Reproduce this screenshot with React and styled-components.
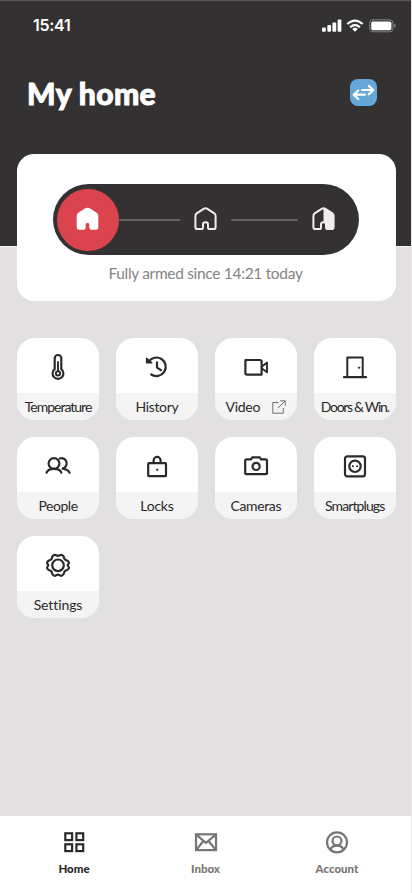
import React from "react";
import styled, { createGlobalStyle } from "styled-components";

const GlobalStyle = createGlobalStyle`
	* {
		box-sizing: border-box;
	}
	body {
		margin: 0;
		background: #e2e0e1;
		font-family: "Lato", "Noto Sans", sans-serif;
		color: #2b292a;
	}
`;

const HouseShape =
	"M9.6 1.9 L2.7 6.4 Q1.4 7.3 1.4 8.8 V20.2 Q1.4 22 3.2 22 H7.4 Q9 22 9 20.4 V17.2 Q9 15.2 11.5 15.2 T14 17.2 V20.4 Q14 22 15.6 22 H19.8 Q21.6 22 21.6 20.2 V8.8 Q21.6 7.3 20.3 6.4 L13.4 1.9 Q11.5 .8 9.6 1.9Z";

const House = ({ variant }) => (
	<svg width="23" height="24" viewBox="0 0 23 24" fill="none">
		<path
			d={HouseShape}
			fill={variant === "full" ? "#fff" : "none"}
			stroke={variant === "full" ? "#fff" : "#f0edee"}
			strokeWidth={variant === "full" ? 1.4 : 2}
			strokeLinejoin="round"
		/>
		{variant === "half" && (
			<path
				d="M11.5 1.4 Q12.5 1.4 13.4 1.9 L20.3 6.4 Q21.6 7.3 21.6 8.8 V20.2 Q21.6 22 19.8 22 H15.6 Q14 22 14 20.4 V17.2 Q14 15.2 11.5 15.2Z"
				fill="#f0edee"
			/>
		)}
	</svg>
);

const Icon = ({ children, size = 28, color = "#2b292a" }) => (
	<svg
		width={size}
		height={size}
		viewBox="0 0 28 28"
		fill="none"
		stroke={color}
		strokeWidth="2.2"
		strokeLinecap="round"
		strokeLinejoin="round"
	>
		{children}
	</svg>
);

const tiles = [
	{
		label: "Temperature",
		spacing: -1,
		icon: (
			<>
				<path d="M10.7 16.2 V5.3 a3.3 3.3 0 0 1 6.6 0 V16.2 a5.4 5.4 0 1 1 -6.6 0Z" />
				<path d="M14 9 V17.5" strokeWidth="1.9" />
				<circle cx="14" cy="20.4" r="2.1" strokeWidth="1.9" />
			</>
		),
	},
	{
		label: "History",
		spacing: -0.35,
		icon: (
			<>
				<path d="M5.6 8.8 A9.3 9.3 0 1 1 8.2 21.5" />
				<path d="M3.6 5.3 V9.8 H8.8Z" fill="#2b292a" strokeWidth="1.4" />
				<path d="M14 9.4 V14.6 L18 17.1" />
			</>
		),
	},
	{
		label: "Video",
		spacing: -0.3,
		external: true,
		icon: (
			<>
				<path d="M3.4 7 H18 Q19.6 7 19.6 8.6 V21.6 H5 Q3.4 21.6 3.4 20Z" />
				<path d="M20 13.4 L25 9.6 V19.2 L20 15.6" strokeWidth="1.9" />
			</>
		),
	},
	{
		label: "Doors & Win.",
		spacing: -1.3,
		icon: (
			<>
				<path d="M6.3 23.7 V4.5 H21.7 V23.7" strokeWidth="2" />
				<path d="M3 24.2 H25" />
				<circle cx="18" cy="14.7" r=".7" fill="#2b292a" strokeWidth="1" />
			</>
		),
	},
	{
		label: "People",
		spacing: -0.45,
		icon: (
			<>
				<circle cx="10" cy="11.5" r="5.4" />
				<path d="M2.6 20.7 C4.5 15.7 15.5 15.7 17.4 20.7" />
				<path d="M15.8 6.5 A5.2 5.2 0 1 1 18.6 16.5 M18.6 16.7 Q23.5 17.2 25.6 20.7" />
			</>
		),
	},
	{
		label: "Locks",
		spacing: -0.25,
		icon: (
			<>
				<rect x="5.2" y="11.1" width="17.8" height="13.1" rx=".8" />
				<path d="M10.6 10.8 V8.4 a3.5 3.5 0 0 1 7 0 V10.8" />
				<circle cx="14.1" cy="17.7" r=".7" fill="#2b292a" strokeWidth="1" />
			</>
		),
	},
	{
		label: "Cameras",
		spacing: -0.35,
		icon: (
			<>
				<path d="M4.6 7.3 H9 L10.3 5.4 H17.8 L19.1 7.3 H23.6 Q25 7.3 25 8.7 V20.8 Q25 22.2 23.6 22.2 H4.6 Q3.2 22.2 3.2 20.8 V8.7 Q3.2 7.3 4.6 7.3Z" />
				<circle cx="14.1" cy="14.4" r="3.6" />
			</>
		),
	},
	{
		label: "Smartplugs",
		spacing: -0.9,
		icon: (
			<>
				<rect x="4" y="4.3" width="20" height="20" rx="2.3" />
				<circle cx="14" cy="14.3" r="5.7" />
				<circle cx="11.9" cy="14.3" r=".5" strokeWidth="1.1" />
				<circle cx="16.1" cy="14.3" r=".5" strokeWidth="1.1" />
			</>
		),
	},
	{
		label: "Settings",
		spacing: -0.1,
		icon: (
			<>
				<path d="M14 4.9 C16 4.9 16.2 3.2 18 4 C20.8 5.1 19.4 6.9 20.7 8.3 C22.2 10 23.8 8.8 24.8 11.2 C25.7 13.2 23.7 12.8 23.7 14.3 C23.7 15.8 25.7 15.4 24.8 17.4 C23.8 19.8 22.2 18.6 20.7 20.3 C19.4 21.7 20.8 23.5 18 24.6 C16.2 25.4 16 23.7 14 23.7 C12 23.7 11.8 25.4 10 24.6 C7.2 23.5 8.6 21.7 7.3 20.3 C5.8 18.6 4.2 19.8 3.2 17.4 C2.3 15.4 4.3 15.8 4.3 14.3 C4.3 12.8 2.3 13.2 3.2 11.2 C4.2 8.8 5.8 10 7.3 8.3 C8.6 6.9 7.2 5.1 10 4 C11.8 3.2 12 4.9 14 4.9Z" />
				<circle cx="14" cy="14.3" r="5.8" />
			</>
		),
	},
];

const tabs = [
	{
		label: "Home",
		active: true,
		icon: (
			<g strokeLinejoin="miter">
				<rect x="5.3" y="5.3" width="6.8" height="6.8" />
				<rect x="16.4" y="5.3" width="6.8" height="6.8" />
				<rect x="5.3" y="16.3" width="6.8" height="6.8" />
				<rect x="16.4" y="16.3" width="6.8" height="6.8" />
			</g>
		),
	},
	{
		label: "Inbox",
		icon: (
			<g strokeLinejoin="miter">
				<rect x="4" y="6.3" width="20" height="15.8" />
				<path d="M4.5 6.8 L14 14.9 L23.5 6.8 M4.5 21.6 L11 13.5 M23.5 21.6 L17 13.5" />
			</g>
		),
	},
	{
		label: "Account",
		icon: (
			<>
				<circle cx="14" cy="14.3" r="10" />
				<circle cx="14" cy="12.9" r="4.4" />
				<path d="M7.6 21.2 C9.5 16.4 18.5 16.4 20.4 21.2" />
			</>
		),
	},
];

const App = () => {
	return (
		<>
			<GlobalStyle />
			<Screen>
				<Header>
					<StatusBar>
						<Time>15:41</Time>
						<svg width="75" height="14" viewBox="0 0 75 14" fill="#fff">
							<rect x="0" y="8.4" width="3.8" height="4.4" rx="1" />
							<rect x="5.3" y="6" width="3.8" height="6.8" rx="1" />
							<rect x="10.4" y="3.4" width="3.8" height="9.4" rx="1" />
							<rect x="15.6" y=".6" width="3.8" height="12.2" rx="1" />
							<g fill="none" stroke="#fff" strokeWidth="2.2">
								<path d="M25.3 5 Q33 -1.9 40.7 5" />
								<path d="M28.1 8.2 Q33 3.8 37.9 8.2" />
							</g>
							<path d="M30.2 10 Q33 7.7 35.8 10 L33 12.8Z" />
							<rect x="47.6" y=".8" width="23.4" height="12" rx="3.4" fill="none" stroke="#858384" />
							<rect x="49.2" y="2.4" width="20.2" height="8.8" rx="1.7" />
							<path d="M72.2 4.8 Q73.8 5.4 73.8 6.8 T72.2 8.8Z" fill="#858384" />
						</svg>
					</StatusBar>
					<TitleRow>
						<Title>My home</Title>
						<SwapButton aria-label="Switch home">
							<svg width="27" height="27" viewBox="0 0 27 27" fill="none" stroke="#fff" strokeWidth="2.2" strokeLinecap="round" strokeLinejoin="round">
								<path d="M12.2 11 H23 M18.8 6.9 L23.3 11 L18.8 15.3" />
								<path d="M15 15.7 H4 M8.2 11.6 L3.7 15.7 L8.2 20" />
							</svg>
						</SwapButton>
					</TitleRow>
				</Header>
				<AlarmCard>
					<Track>
						<Mode $active>
							<House variant="full" />
						</Mode>
						<Line $width={61} />
						<Mode>
							<House />
						</Mode>
						<Line $width={67} />
						<Mode>
							<House variant="half" />
						</Mode>
					</Track>
					<AlarmText>Fully armed since 14:21 today</AlarmText>
				</AlarmCard>
				<Grid>
					{tiles.map((tile) => (
						<Tile key={tile.label}>
							<TileIcon>
								<Icon>{tile.icon}</Icon>
							</TileIcon>
							<TileLabel $spacing={tile.spacing}>
								{tile.label}
								{tile.external && (
									<svg width="14" height="14" viewBox="0 0 14 14" fill="none" stroke="#6f6d6e">
										<path d="M6.5 2.5 H.8 V13.2 H11.3 V8 M5.8 8.2 L13 1 M8.2 .8 H13.2 V5.8" />
									</svg>
								)}
							</TileLabel>
						</Tile>
					))}
				</Grid>
				<TabBar>
					{tabs.map((tab) => (
						<Tab key={tab.label} $active={tab.active}>
							<Icon color={tab.active ? "#2b292a" : "#797576"}>{tab.icon}</Icon>
							<span>{tab.label}</span>
						</Tab>
					))}
				</TabBar>
			</Screen>
		</>
	);
};

const Screen = styled.div`
	display: flex;
	flex-direction: column;
	width: 412px;
	height: 893px;
	overflow: hidden;
	background: #e2e0e1;
	border-right: 1px solid #e9e8e8;
`;

const Header = styled.header`
	flex: none;
	height: 247px;
	margin-right: -1px;
	background: #343132;
	border-top: 1px solid #575556;
	border-right: 1px solid #777576;
	border-bottom: 1px solid #f4f3f3;
`;

const StatusBar = styled.div`
	display: flex;
	justify-content: space-between;
	align-items: center;
	padding: 17px 14px 0 33px;
	height: 32px;
`;

const Time = styled.span`
	margin-bottom: 2px;
	font-family: "Inter", sans-serif;
	font-weight: 600;
	font-size: 16px;
	line-height: 14px;
	letter-spacing: -0.3px;
	color: #fff;
`;

const TitleRow = styled.div`
	display: flex;
	justify-content: space-between;
	align-items: center;
	padding: 0 34px 0 27px;
	margin-top: 38px;
	height: 42px;
`;

const Title = styled.h1`
	margin: 2px 0 0;
	font-weight: 900;
	font-size: 30px;
	line-height: 42px;
	letter-spacing: 0.4px;
	color: #fff;
	-webkit-text-stroke: 0.9px #fff;
`;

const SwapButton = styled.button`
	display: flex;
	width: 27px;
	height: 27px;
	padding: 0;
	border: none;
	border-radius: 8px;
	background: #65a7d9;
`;

const AlarmCard = styled.section`
	flex: none;
	display: flex;
	flex-direction: column;
	align-items: center;
	width: 379px;
	height: 147px;
	margin: -93px 0 0 17px;
	padding: 30px 2px 0 0;
	border-radius: 17px;
	background: #fff;
`;

const Track = styled.div`
	display: flex;
	align-items: center;
	width: 306px;
	height: 71px;
	padding: 0 4px;
	border-radius: 36px;
	background: #343132;
`;

const Mode = styled.div`
	display: flex;
	flex: none;
	justify-content: center;
	align-items: center;
	width: ${({ $active }) => ($active ? "62px" : "51px")};
	height: 62px;
	padding-bottom: 1px;
	border-radius: 50%;
	background: ${({ $active }) => ($active ? "#db444e" : "transparent")};
`;

const Line = styled.div`
	flex: none;
	width: ${({ $width }) => $width}px;
	height: 2px;
	border-radius: 1px;
	background: #666364;
`;

const AlarmText = styled.p`
	margin: 6px 0 0;
	font-size: 15.5px;
	line-height: 24px;
	letter-spacing: -0.32px;
	white-space: nowrap;
	color: #858384;
`;

const Grid = styled.div`
	display: grid;
	grid-template-columns: repeat(4, 82px);
	grid-auto-rows: 82px;
	gap: 17px 16.9px;
	flex: 1;
	padding: 37px 0 0 17px;
`;

const Tile = styled.div`
	display: flex;
	flex-direction: column;
	overflow: hidden;
	border-radius: 18px;
	background: #fff;
`;

const TileIcon = styled.div`
	display: flex;
	justify-content: center;
	padding-top: 15px;
	height: 55px;
`;

const TileLabel = styled.div`
	display: flex;
	justify-content: center;
	align-items: center;
	gap: 12px;
	height: 27px;
	background: #f4f4f4;
	font-size: 14px;
	line-height: 27px;
	letter-spacing: ${({ $spacing }) => $spacing}px;
	white-space: nowrap;
`;

const TabBar = styled.nav`
	flex: none;
	display: flex;
	justify-content: space-between;
	height: 77px;
	padding: 12px 34px 0;
	background: #fff;
`;

const Tab = styled.div`
	display: flex;
	flex-direction: column;
	align-items: center;
	width: 80px;
	font-size: 11.5px;
	font-weight: 900;
	line-height: 16px;
	color: ${({ $active }) => ($active ? "#2b292a" : "#797576")};

	span {
		margin-top: 5px;
	}
`;

export default App;
